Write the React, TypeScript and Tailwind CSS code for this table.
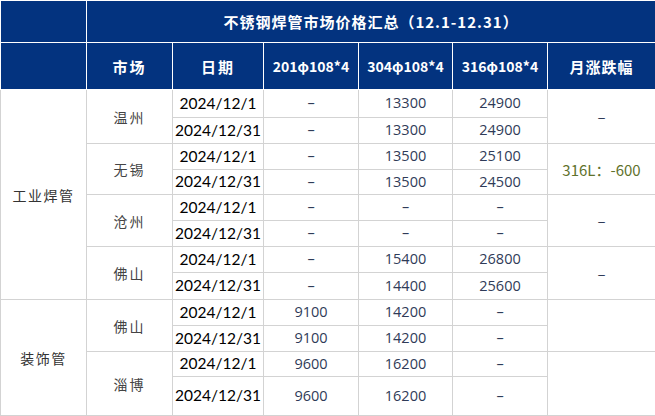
import React from "react"

type Row = {
  h: number
  date: string
  p201: string
  p304: string
  p316: string
  group?: { label: string; span: number }
  market?: { label: string; span: number }
  change?: { label: string; span: number; green?: boolean }
}

const D = "–"

const rows: Row[] = [
  { h: 28, date: "2024/12/1", p201: D, p304: "13300", p316: "24900", group: { label: "工业焊管", span: 8 }, market: { label: "温州", span: 2 }, change: { label: D, span: 2 } },
  { h: 26, date: "2024/12/31", p201: D, p304: "13300", p316: "24900" },
  { h: 26, date: "2024/12/1", p201: D, p304: "13500", p316: "25100", market: { label: "无锡", span: 2 }, change: { label: "316L：-600", span: 2, green: true } },
  { h: 25, date: "2024/12/31", p201: D, p304: "13500", p316: "24500" },
  { h: 26, date: "2024/12/1", p201: D, p304: D, p316: D, market: { label: "沧州", span: 2 }, change: { label: D, span: 2 } },
  { h: 26, date: "2024/12/31", p201: D, p304: D, p316: D },
  { h: 26, date: "2024/12/1", p201: D, p304: "15400", p316: "26800", market: { label: "佛山", span: 2 }, change: { label: D, span: 2 } },
  { h: 27, date: "2024/12/31", p201: D, p304: "14400", p316: "25600" },
  { h: 26, date: "2024/12/1", p201: "9100", p304: "14200", p316: D, group: { label: "装饰管", span: 4 }, market: { label: "佛山", span: 2 }, change: { label: "", span: 2 } },
  { h: 26, date: "2024/12/31", p201: "9100", p304: "14200", p316: D },
  { h: 25, date: "2024/12/1", p201: "9600", p304: "16200", p316: D, market: { label: "淄博", span: 2 }, change: { label: "", span: 2 } },
  { h: 39, date: "2024/12/31", p201: "9600", p304: "16200", p316: D },
]

const cjk = "font-['Noto_Sans_CJK_SC',sans-serif]"
const headCell = `border border-white bg-[#03337f] text-white font-bold text-center p-0 leading-none ${cjk}`
const cell = "border border-[#d3d3d3] text-center p-0 leading-none"
const num = `${cell} font-['Open_Sans','Noto_Sans_CJK_SC',sans-serif] text-[14.5px] text-[#2f3b58]`

export default function App() {
  return (
    <div className="w-[655px] h-[416px] bg-white overflow-hidden">
      <table className="w-[655px] table-fixed border-collapse">
        <colgroup>
          <col className="w-[86px]" />
          <col className="w-[86px]" />
          <col className="w-[91px]" />
          <col className="w-[95px]" />
          <col className="w-[94px]" />
          <col className="w-[95px]" />
          <col className="w-[108px]" />
        </colgroup>
        <thead>
          <tr>
            <th className={`${headCell} h-[42px]`} />
            <th colSpan={6} className={`${headCell} h-[42px] text-[15px] tracking-[1px]`}>
              不锈钢焊管市场价格汇总（12.1-12.31）
            </th>
          </tr>
          <tr>
            <th className={`${headCell} h-[47px]`} />
            <th className={`${headCell} text-[15px] tracking-[2px]`}>市场</th>
            <th className={`${headCell} text-[15px] tracking-[2px]`}>日期</th>
            <th className={`${headCell} text-[14px] font-['Liberation_Sans',sans-serif]`}>201φ108*4</th>
            <th className={`${headCell} text-[14px] font-['Liberation_Sans',sans-serif]`}>304φ108*4</th>
            <th className={`${headCell} text-[14px] font-['Liberation_Sans',sans-serif]`}>316φ108*4</th>
            <th className={`${headCell} text-[15px] tracking-[1px]`}>月涨跌幅</th>
          </tr>
        </thead>
        <tbody>
          {rows.map((r, i) => (
            <tr key={i}>
              {r.group && (
                <td rowSpan={r.group.span} className={`${cell} ${cjk} text-[14px] tracking-[1.5px] text-[#333]`}>
                  {r.group.label}
                </td>
              )}
              {r.market && (
                <td rowSpan={r.market.span} className={`${cell} ${cjk} text-[14px] tracking-[2px] text-[#444]`}>
                  {r.market.label}
                </td>
              )}
              <td style={{ height: r.h }} className={`${cell} font-['Lato',sans-serif] text-[15.5px] text-black`}>
                {r.date}
              </td>
              <td className={num}>{r.p201}</td>
              <td className={num}>{r.p304}</td>
              <td className={num}>{r.p316}</td>
              {r.change && (
                <td
                  rowSpan={r.change.span}
                  className={`${cell} font-['Noto_Sans_CJK_SC',sans-serif] text-[15px] ${r.change.green ? "text-[#5f722c]" : "text-[#2f3b58]"}`}
                >
                  {r.change.label}
                </td>
              )}
            </tr>
          ))}
        </tbody>
      </table>
    </div>
  )
}
